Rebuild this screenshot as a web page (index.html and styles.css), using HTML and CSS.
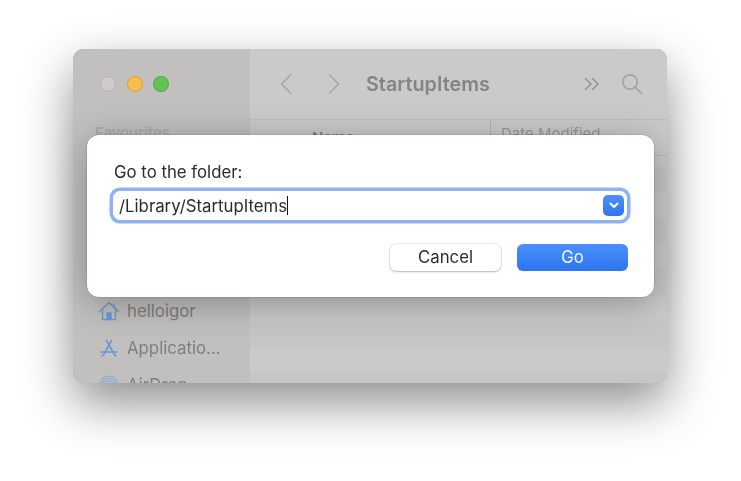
FILE: index.html
```html
<!DOCTYPE html>
<html lang="en">
<head>
<meta charset="utf-8">
<title>Go to the folder</title>
<link rel="stylesheet" href="styles.css">
</head>
<body>
<div class="window">
  <aside class="sidebar">
    <div class="lights">
      <span class="light light-close"></span>
      <span class="light light-min"></span>
      <span class="light light-max"></span>
    </div>
    <div class="fav-title">Favourites</div>
    <div class="side-spacer"></div>
    <div class="side-item">
      <svg class="side-icon" width="22" height="20" viewBox="0 0 22 20" fill="none" stroke="#6a9ad6" stroke-width="1.4" stroke-linejoin="round" stroke-linecap="round"><path d="M1.5 10.5 11 1.5l9.5 9"/><path d="M4.5 8.5V18.5h13V8.5"/><path d="M16 3v3"/><rect x="9" y="12" width="4" height="6.5" fill="#6a9ad6"/></svg>
      <span>helloigor</span>
    </div>
    <div class="side-item">
      <svg class="side-icon" width="22" height="20" viewBox="0 0 22 20" fill="none" stroke="#6a9ad6" stroke-width="1.6" stroke-linecap="round"><path d="M8.5 2.5 16 16"/><path d="M13.5 2.5 6 16"/><path d="M3 14h16"/><path d="M4 18l2-2M18 18l-2-2"/></svg>
      <span>Applicatio...</span>
    </div>
    <div class="side-item">
      <svg class="side-icon" width="22" height="20" viewBox="0 0 22 20" fill="none" stroke="#7ea6dc" stroke-width="1.2"><circle cx="11" cy="10" r="9"/><circle cx="11" cy="10" r="6.5"/><circle cx="11" cy="10" r="4"/><circle cx="11" cy="10" r="1.6"/></svg>
      <span>AirDrop</span>
    </div>
  </aside>
  <main class="content">
    <header class="toolbar">
      <svg class="nav-icon" width="14" height="22" viewBox="0 0 14 22" fill="none" stroke="#a9a8a6" stroke-width="1.7" stroke-linecap="round" stroke-linejoin="round"><path d="M11.5 2 2.5 11l9 9"/></svg>
      <svg class="nav-icon nav-next" width="14" height="22" viewBox="0 0 14 22" fill="none" stroke="#a9a8a6" stroke-width="1.7" stroke-linecap="round" stroke-linejoin="round"><path d="M2.5 2l9 9-9 9"/></svg>
      <div class="title">StartupItems</div>
      <svg class="more-icon" width="16" height="14" viewBox="0 0 16 14" fill="none" stroke="#8e8d8b" stroke-width="1.3" stroke-linecap="round" stroke-linejoin="round"><path d="M1.5 1.5 7 7l-5.5 5.5"/><path d="M8.5 1.5 14 7l-5.5 5.5"/></svg>
      <svg class="search-icon" width="22" height="22" viewBox="0 0 22 22" fill="none" stroke="#a5a4a2" stroke-width="1.7" stroke-linecap="round"><circle cx="9" cy="9" r="7.2"/><path d="M14.2 14.2 20.5 20.5"/></svg>
    </header>
    <div class="columns">
      <span class="col col-name">Name</span>
      <span class="col col-date">Date Modified</span>
    </div>
    <div class="rows">
      <div class="row"></div><div class="row"></div><div class="row"></div>
      <div class="row"></div><div class="row"></div><div class="row"></div>
      <div class="row"></div><div class="row"></div><div class="row"></div>
    </div>
  </main>
</div>

<div class="dialog">
  <label class="dialog-label">Go to the folder:</label>
  <div class="field">
    <span class="field-text">/Library/StartupItems</span><span class="caret"></span>
    <span class="combo">
      <svg width="10" height="7" viewBox="0 0 10 7" fill="none" stroke="#fff" stroke-width="2" stroke-linecap="round" stroke-linejoin="round"><path d="M1.5 1.5 5 5l3.5-3.5"/></svg>
    </span>
  </div>
  <div class="actions">
    <button class="btn btn-cancel">Cancel</button>
    <button class="btn btn-go">Go</button>
  </div>
</div>
</body>
</html>
```
FILE: styles.css
```css
* { box-sizing: border-box; }
html, body { height: 100%; }
body {
  margin: 0;
  padding: 49px 0 0 73px;
  background: #fff;
  font-family: Inter, "Liberation Sans", sans-serif;
  overflow: hidden;
  position: relative;
}
.window {
  width: 594px;
  height: 334px;
  border-radius: 11px;
  overflow: hidden;
  display: flex;
  box-shadow: inset 0 0 0 .5px #a4a4a4, 0 20px 50px rgba(0,0,0,.45);
  background: #c8c7c5;
}
.sidebar {
  width: 177px;
  flex: none;
  padding: 0 0 0 22px;
  background: #c2bfbf;
  display: flex;
  flex-direction: column;
  filter: blur(.4px);
}
.lights { display: flex; gap: 10.5px; margin: 27px 0 0 5px; }
.light { width: 16px; height: 16px; border-radius: 50%; border: .5px solid rgba(0,0,0,.12); }
.light-close { background: #d0cbca; }
.light-min { background: #f7bd4f; }
.light-max { background: #5fc454; }
.fav-title { margin-top: 33px; font-size: 14.8px; line-height: 17px; font-weight: 600; color: #aeabab; }
.side-spacer { height: 150px; flex: none; }
.side-item { display: flex; align-items: center; gap: 7px; height: 37px; font-size: 16.8px; color: #7f7e7e; flex: none; white-space: nowrap; }
.side-icon { flex: none; margin-left: 3px; }
.content { flex: 1; display: flex; flex-direction: column; min-width: 0; filter: blur(.4px); }
.toolbar {
  height: 71px;
  flex: none;
  display: flex;
  align-items: center;
  padding: 0 24px 0 29px;
  background: #cbcac8;
  border-bottom: 1px solid #bdbcba;
}
.nav-next { margin-left: 34px; }
.title { margin-left: 25px; font-size: 19.8px; font-weight: 600; color: #858483; flex: 1; white-space: nowrap; }
.more-icon { margin-right: 21px; margin-left: -4px; }
.columns {
  height: 36px;
  flex: none;
  background: #cbcac8;
  font-size: 15px;
  color: #7f7e7d;
  display: flex;
  align-items: flex-start;
  padding: 8px 0 0 62px;
  border-bottom: 1px solid #bdbcba;
}
.col-name { width: 178px; font-weight: 600; white-space: nowrap; }
.col-date { border-left: 1px solid #b4b3b1; padding: 5px 0 0 10px; line-height: 18px; margin-top: -8px; color: #999896; white-space: nowrap; height: 30px; }
.rows { flex: 1; display: flex; flex-direction: column; background: #cacac9; overflow: hidden; padding-top: 10px; }
.row { height: 26px; flex: none; }
.row:nth-child(odd) { background: #c6c6c5; }
.dialog {
  position: absolute;
  left: 87px;
  top: 135px;
  width: 567px;
  height: 162px;
  background: #fff;
  border-radius: 12px;
  box-shadow: 0 0 0 .5px rgba(0,0,0,.18), 0 6px 36px rgba(0,0,0,.3);
  padding: 27px 26px 0 27px;
  color: #2b2b2b;
  display: flex;
  flex-direction: column;
}
.dialog-label { font-size: 16.8px; line-height: 20px; height: 20px; filter: blur(.25px); }
.field {
  margin-top: 9px;
  margin-left: -1px;
  height: 29px;
  width: 514px;
  display: flex;
  align-items: center;
  padding: 0 2px 0 5px;
  border: 1px solid #fff;
  border-radius: 7px;
  box-shadow: 0 0 0 3.5px #8fb3f2;
  background: #fff;
  font-size: 16.8px;
}
.field-text { white-space: nowrap; filter: blur(.25px); }
.caret { width: 1.2px; height: 19px; background: #111; margin-left: 0; }
.combo {
  margin-left: auto;
  width: 21px;
  height: 21px;
  border-radius: 5px;
  background: linear-gradient(#4d8ff8, #2f75ef);
  display: flex;
  align-items: center;
  justify-content: center;
}
.actions { display: flex; justify-content: flex-end; gap: 16px; margin-top: 24px; }
.btn {
  width: 111px;
  height: 27px;
  border: 0;
  border-radius: 6px;
  font: 400 16.8px/27px Inter, "Liberation Sans", sans-serif;
  padding: 0;
}
.btn-cancel { background: #fff; color: #2b2b2b; box-shadow: 0 0 0 .5px rgba(0,0,0,.14), 0 1px 2px rgba(0,0,0,.22); }
.btn-go { background: linear-gradient(#4a8ffa, #2c75f0); color: #f4f8ff; }
```
